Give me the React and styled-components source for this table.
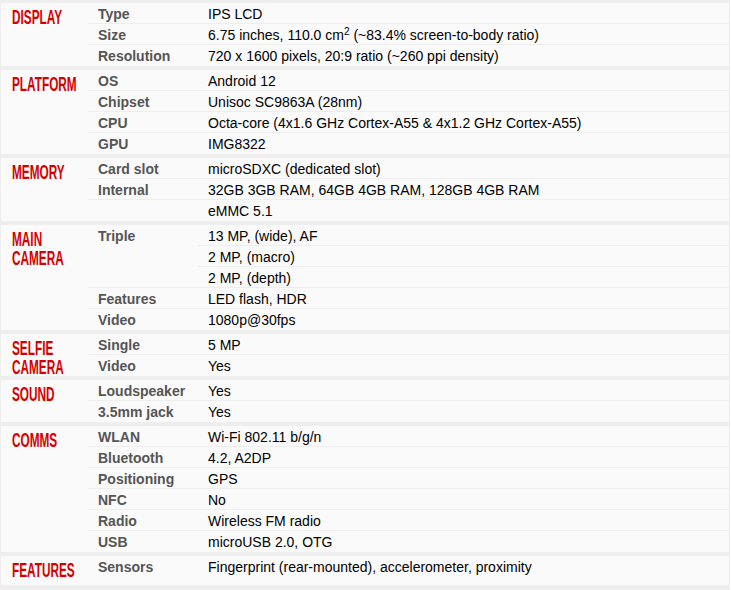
import React from "react";
import styled, { createGlobalStyle } from "styled-components";

const Global = createGlobalStyle`
  html, body { margin: 0; padding: 0; background: #fff; }
  body { font-family: "Liberation Sans", Arial, sans-serif; }
`;

const Wrapper = styled.div`
  width: 730px;
  box-sizing: border-box;
  background: #eee;
  padding: 3px 1px 5px 1px;
  display: flex;
  flex-direction: column;
  gap: 4px;
`;

const Section = styled.section`
  display: grid;
  grid-template-columns: 87px 1fr;
  background: #fafafa;
  min-height: ${(p) => (p.$minHeight ? `${p.$minHeight}px` : "auto")};
`;

const Header = styled.div`
  padding: 5px 0 0 11px;
  width: 76px;
  overflow: hidden;
`;

const Title = styled.div`
  font-family: "Liberation Sans", Arial, sans-serif;
  font-weight: 700;
  font-size: 20px;
  line-height: 18.5px;
  color: #d50000;
  white-space: nowrap;
  width: 130px;
  transform: scaleX(0.59);
  transform-origin: left top;
  text-transform: uppercase;
`;

const TitleLine = styled.div`
  display: block;
`;

const Items = styled.div`
  display: flex;
  flex-direction: column;
`;

const Item = styled.div`
  display: grid;
  grid-template-columns: 110px 1fr;
  &:not(:last-child) {
    box-shadow: inset 0 -1px #eee;
  }
`;

const Label = styled.div`
  padding: 1px 0 0 10px;
  font-size: 14px;
  line-height: 20px;
  font-weight: 700;
  color: #555;
  white-space: nowrap;
`;

const Values = styled.div`
  display: flex;
  flex-direction: column;
`;

const Value = styled.div`
  padding: 1px 0 0 10px;
  font-size: 14px;
  line-height: 20px;
  color: #000;
  white-space: nowrap;
  &:not(:last-child) {
    box-shadow: inset 0 -1px #eee;
  }
`;

const Sup = styled.sup`
  font-size: 10px;
  line-height: 0;
  vertical-align: 5px;
`;

const data = [
  {
    title: ["DISPLAY"],
    items: [
      ["Type", ["IPS LCD"]],
      [
        "Size",
        [
          <>
            6.75 inches, 110.0 cm<Sup>2</Sup> (~83.4% screen-to-body ratio)
          </>,
        ],
      ],
      ["Resolution", ["720 x 1600 pixels, 20:9 ratio (~260 ppi density)"]],
    ],
  },
  {
    title: ["PLATFORM"],
    items: [
      ["OS", ["Android 12"]],
      ["Chipset", ["Unisoc SC9863A (28nm)"]],
      ["CPU", ["Octa-core (4x1.6 GHz Cortex-A55 & 4x1.2 GHz Cortex-A55)"]],
      ["GPU", ["IMG8322"]],
    ],
  },
  {
    title: ["MEMORY"],
    items: [
      ["Card slot", ["microSDXC (dedicated slot)"]],
      ["Internal", ["32GB 3GB RAM, 64GB 4GB RAM, 128GB 4GB RAM"]],
      ["", ["eMMC 5.1"]],
    ],
  },
  {
    title: ["MAIN", "CAMERA"],
    items: [
      ["Triple", ["13 MP, (wide), AF", "2 MP, (macro)", "2 MP, (depth)"]],
      ["Features", ["LED flash, HDR"]],
      ["Video", ["1080p@30fps"]],
    ],
  },
  {
    title: ["SELFIE", "CAMERA"],
    items: [
      ["Single", ["5 MP"]],
      ["Video", ["Yes"]],
    ],
  },
  {
    title: ["SOUND"],
    items: [
      ["Loudspeaker", ["Yes"]],
      ["3.5mm jack", ["Yes"]],
    ],
  },
  {
    title: ["COMMS"],
    items: [
      ["WLAN", ["Wi-Fi 802.11 b/g/n"]],
      ["Bluetooth", ["4.2, A2DP"]],
      ["Positioning", ["GPS"]],
      ["NFC", ["No"]],
      ["Radio", ["Wireless FM radio"]],
      ["USB", ["microUSB 2.0, OTG"]],
    ],
  },
  {
    title: ["FEATURES"],
    minHeight: 29,
    items: [
      ["Sensors", ["Fingerprint (rear-mounted), accelerometer, proximity"]],
    ],
  },
];

export default function App() {
  return (
    <>
      <Global />
      <Wrapper>
        {data.map((sec, i) => (
          <Section key={i} $minHeight={sec.minHeight}>
            <Header>
              <Title>
                {sec.title.map((t, j) => (
                  <TitleLine key={j}>{t}</TitleLine>
                ))}
              </Title>
            </Header>
            <Items>
              {sec.items.map(([label, values], k) => (
                <Item key={k}>
                  <Label>{label}</Label>
                  <Values>
                    {values.map((v, m) => (
                      <Value key={m}>{v}</Value>
                    ))}
                  </Values>
                </Item>
              ))}
            </Items>
          </Section>
        ))}
      </Wrapper>
    </>
  );
}
